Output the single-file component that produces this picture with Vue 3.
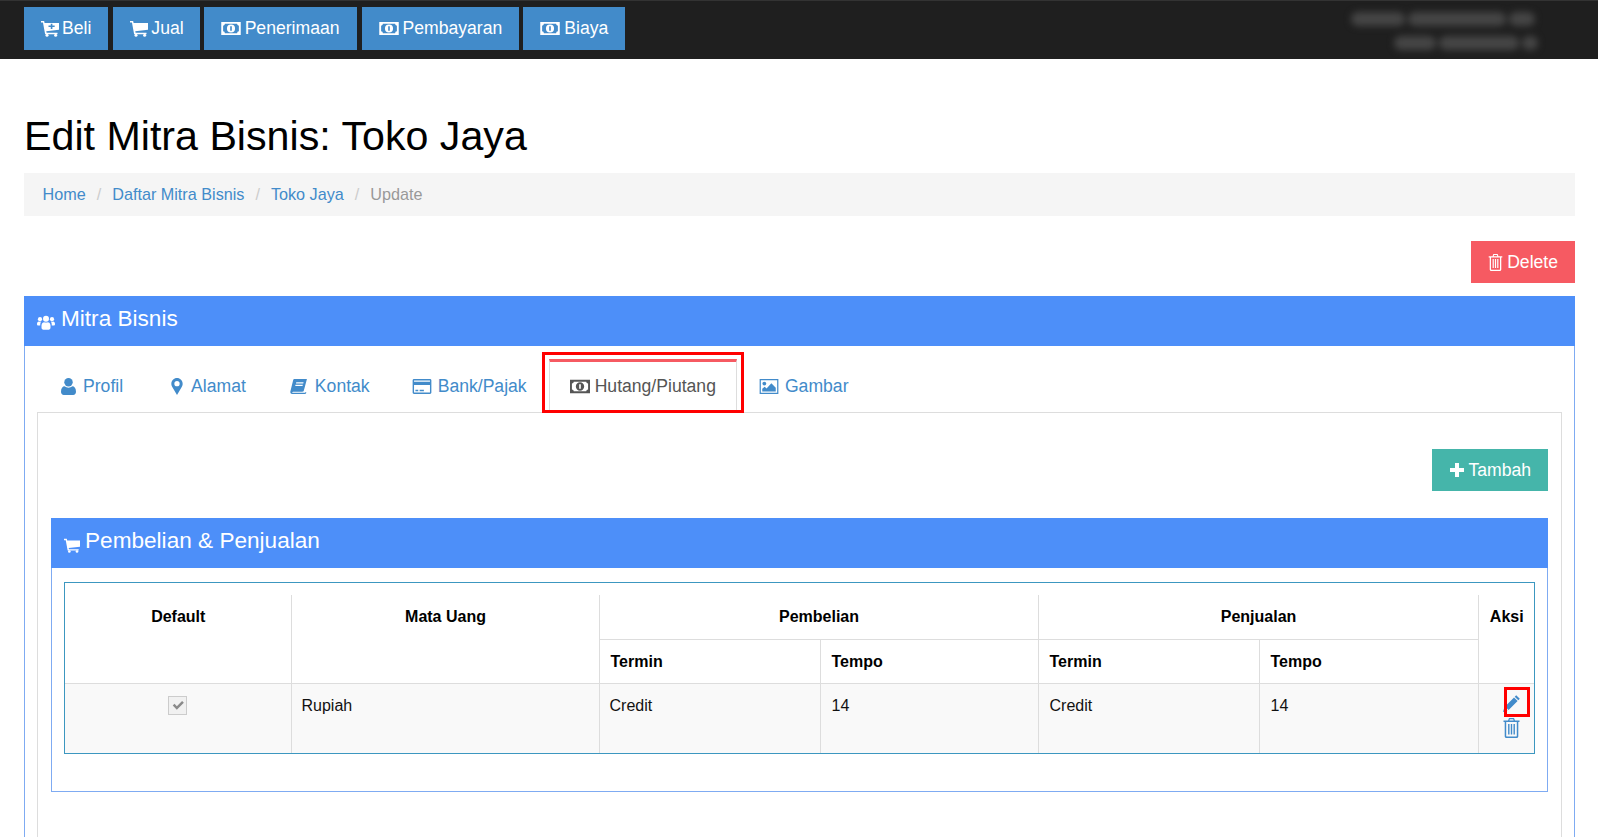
<script setup>
const navButtons = [
  { label: 'Beli', icon: 'i-cart-plus' },
  { label: 'Jual', icon: 'i-cart' },
  { label: 'Penerimaan', icon: 'i-money' },
  { label: 'Pembayaran', icon: 'i-money' },
  { label: 'Biaya', icon: 'i-money' }
]
const tabs = [
  { label: 'Profil', icon: 'i-user', cls: 'ic-user', tab: 'tab-profil' },
  { label: 'Alamat', icon: 'i-marker', cls: 'ic-marker', tab: '' },
  { label: 'Kontak', icon: 'i-book', cls: 'ic-book', tab: 'tab-kontak' },
  { label: 'Bank/Pajak', icon: 'i-card', cls: 'ic-wide', tab: 'tab-bank' },
  { label: 'Hutang/Piutang', icon: 'i-money', cls: 'ic-wide', tab: 'active' },
  { label: 'Gambar', icon: 'i-image', cls: 'ic-wide', tab: 'tab-gambar' }
]
</script>

<template>
  <div class="page">
    <svg class="defs" aria-hidden="true">
      <defs>
        <symbol id="i-cart" viewBox="0 0 24 22">
          <path d="M0 1h4.200l.6 2.500H24v9.300L7 14.600l.5 2H22v2H5.500L2.600 3H0z" />
          <circle cx="8" cy="20" r="2" /><circle cx="19.500" cy="20" r="2" />
        </symbol>
        <symbol id="i-cart-plus" viewBox="0 0 24 22">
          <path fill-rule="evenodd" d="M0 1h4.200l.6 2.500H24v9.300L7 14.600l.5 2H22v2H5.500L2.600 3H0zM13 4.500v2.600h-3v2h3v2.600h2.200V9.100h3v-2h-3V4.500z" />
          <circle cx="8" cy="20" r="2" /><circle cx="19.500" cy="20" r="2" />
        </symbol>
        <symbol id="i-money" viewBox="0 0 24 16">
          <path fill-rule="evenodd" d="M0 0H24V16H0ZM4.500 2.300H19.500Q19.500 4.500 21.700 4.500V11.500Q19.500 11.500 19.500 13.700H4.500Q4.500 11.500 2.300 11.500V4.500Q4.500 4.500 4.500 2.300ZM12 3a5 5 0 1 0 0 10a5 5 0 1 0 0-10ZM11 5.300h2v5.400h-2Z" />
        </symbol>
        <symbol id="i-users" viewBox="0 0 24 20">
          <circle cx="12" cy="5" r="4" /><circle cx="4" cy="5.500" r="2.800" /><circle cx="20" cy="5.500" r="2.800" />
          <path d="M6 14c0-3 2-4.500 3.500-4.500 1 .8 4 .8 5 0C16 9.500 18 11 18 14v3c0 1.500-1 2.500-2.500 2.500h-7C7 19.500 6 18.500 6 17z" />
          <path d="M0 12c0-2 1-3.500 2.500-3.500 1 .6 2 .6 3 .3C4.800 10 4.300 11.500 4.300 14H1.500C.5 14 0 13.300 0 12zM24 12c0-2-1-3.500-2.500-3.500-1 .6-2 .6-3 .3.700 1.200 1.200 2.700 1.200 5.200h2.800c1 0 1.500-.7 1.500-2z" />
        </symbol>
        <symbol id="i-user" viewBox="0 0 16 18">
          <circle cx="8" cy="4.500" r="4.500" />
          <path d="M0 14.500C0 11 1.800 8.800 3.800 8.800c1.200 1 2.700 1.500 4.200 1.500s3-.5 4.200-1.500c2 0 3.800 2.200 3.800 5.700 0 2-1.200 3.500-3 3.500H3c-1.800 0-3-1.500-3-3.500z" />
        </symbol>
        <symbol id="i-marker" viewBox="0 0 12 18">
          <path fill-rule="evenodd" d="M6 0C2.700 0 0 2.600 0 6c0 1.500.4 2.400 1 3.600L6 18l5-8.400c.6-1.200 1-2.100 1-3.600 0-3.400-2.700-6-6-6zm0 3.200a2.800 2.800 0 1 1 0 5.600 2.800 2.800 0 0 1 0-5.600z" />
        </symbol>
        <symbol id="i-book" viewBox="0 0 18 16">
          <path fill-rule="evenodd" d="M4.500 0H18l-3.300 12.300c-.2.900-.8 1.200-1.600 1.200H3.200c-.8 0-1.300.9-.6 1.200h12.600c.6 0 1.100-.3 1.300-.9l.9.500c-.3 1-1.100 1.700-2.200 1.700H2.300C.7 16 0 14.500.3 13.300L3.400.9C3.500.4 4 0 4.500 0zM6.600 3.500l-.3 1.200h7.800l.3-1.200zM5.800 6.200l-.3 1.200h7.800l.3-1.200z" />
        </symbol>
        <symbol id="i-card" viewBox="0 0 20 16">
          <path fill-rule="evenodd" d="M1.500 0h17c.9 0 1.500.6 1.500 1.500v13c0 .9-.6 1.500-1.500 1.500h-17C.6 16 0 15.400 0 14.500v-13C0 .6.600 0 1.500 0zM1.500 1.500V3h17V1.500zM1.500 6.500v8h17v-8zM3 11.500h3V13H3zM7.500 11.500h4.500V13H7.500z" />
        </symbol>
        <symbol id="i-image" viewBox="0 0 20 16">
          <path fill-rule="evenodd" d="M0 0h20v16H0zM1.300 1.300v13.400h17.400V1.300z" />
          <circle cx="5" cy="4.800" r="2" />
          <path d="M2.800 13.300V10.500l2.600-2.300 2 1.900 5.100-5.500 4.700 4.600v4.100z" />
        </symbol>
        <symbol id="i-trash" viewBox="0 0 16 20">
          <path fill-rule="evenodd" d="M5.500 0h5l1 2.500H16V4h-1.200v14.200c0 1-.8 1.800-1.800 1.800H3c-1 0-1.800-.8-1.800-1.800V4H0V2.500h4.500zM6.300 1.300l-.4 1.200h4.200l-.4-1.200zM2.700 4v14c0 .3.200.5.500.5h9.600c.3 0 .5-.2.500-.5V4zM4.600 6h1.400v10.500H4.600zM7.300 6h1.400v10.500H7.300zM10 6h1.400v10.500H10z" />
        </symbol>
        <symbol id="i-pencil" viewBox="0 0 18 18">
          <path d="M13.200 1.200l3.600 3.600-1.500 1.500-3.600-3.600zM11 3.400l3.600 3.600-9 9-3.600-3.600zM1.300 13.500l3.200 3.200L0 18z" />
        </symbol>
        <symbol id="i-plus" viewBox="0 0 14 14">
          <path d="M5 0h4v5h5v4H9v5H5V9H0V5h5z" />
        </symbol>
      </defs>
    </svg>

    <header class="topbar">
      <nav class="topnav">
        <a v-for="b in navButtons" :key="b.label" class="btn btn-nav">
          <svg class="ic" :class="b.icon === 'i-money' ? 'ic-money' : 'ic-cart'"><use :href="'#' + b.icon" /></svg>{{ b.label }}
        </a>
      </nav>
      <div class="smudge" aria-hidden="true">
        <div class="smudge-row row-a">
          <span class="s1"></span><span class="s2"></span><span class="s3"></span>
        </div>
        <div class="smudge-row">
          <span class="s4"></span><span class="s5"></span><span class="s6"></span>
        </div>
      </div>
    </header>

    <main class="content">
      <h1 class="title">Edit Mitra Bisnis: Toko Jaya</h1>

      <ol class="breadcrumb">
        <li><a>Home</a></li>
        <li class="sep">/</li>
        <li><a>Daftar Mitra Bisnis</a></li>
        <li class="sep">/</li>
        <li><a>Toko Jaya</a></li>
        <li class="sep">/</li>
        <li class="current">Update</li>
      </ol>

      <div class="actions">
        <a class="btn btn-delete"><svg class="ic ic-del"><use href="#i-trash" /></svg>Delete</a>
      </div>

      <section class="panel">
        <div class="panel-head">
          <svg class="ic ic-users"><use href="#i-users" /></svg>Mitra Bisnis
        </div>
        <div class="panel-body">
          <ul class="tabs">
            <li v-for="t in tabs" :key="t.label" class="tab" :class="t.tab">
              <svg class="ic" :class="t.cls"><use :href="'#' + t.icon" /></svg>{{ t.label }}
            </li>
          </ul>

          <div class="pane">
            <div class="pane-actions">
              <a class="btn btn-add"><svg class="ic ic-plus"><use href="#i-plus" /></svg>Tambah</a>
            </div>

            <section class="panel inner">
              <div class="panel-head inner-head">
                <svg class="ic ic-innercart"><use href="#i-cart" /></svg>Pembelian &amp; Penjualan
              </div>
              <div class="inner-body">
                <div class="table-wrap">
                  <table class="grid">
                    <colgroup>
                      <col class="c-default" /><col class="c-currency" /><col class="c-term" /><col class="c-tempo" />
                      <col class="c-term2" /><col class="c-tempo2" /><col />
                    </colgroup>
                    <thead>
                      <tr>
                        <th rowspan="2" class="center">Default</th>
                        <th rowspan="2" class="center">Mata Uang</th>
                        <th colspan="2" class="center">Pembelian</th>
                        <th colspan="2" class="center">Penjualan</th>
                        <th rowspan="2" class="center">Aksi</th>
                      </tr>
                      <tr>
                        <th>Termin</th><th>Tempo</th><th>Termin</th><th>Tempo</th>
                      </tr>
                    </thead>
                    <tbody>
                      <tr>
                        <td class="center">
                          <span class="checkbox" role="checkbox" aria-checked="true" aria-disabled="true">
                            <svg viewBox="0 0 12 12" class="check"><path d="M1.500 6.500l1.500-1.500 2 2L9.500 2.500 11 4 5 10z" /></svg>
                          </span>
                        </td>
                        <td>Rupiah</td>
                        <td>Credit</td>
                        <td>14</td>
                        <td>Credit</td>
                        <td>14</td>
                        <td class="center aksi">
                          <a class="act act-edit"><svg class="ic ic-pencil"><use href="#i-pencil" /></svg></a>
                          <a class="act"><svg class="ic ic-trash"><use href="#i-trash" /></svg></a>
                        </td>
                      </tr>
                    </tbody>
                  </table>
                </div>
              </div>
            </section>
          </div>
        </div>
      </section>
    </main>
  </div>
</template>

<style>
html, body { margin: 0; background: #fff; overflow: hidden; }
</style>

<style scoped>
.page {
  height: 837px;
  overflow: hidden;
  font-family: "Liberation Sans", Arial, sans-serif;
  font-size: 16px;
  color: #111;
  background: #fff;
}
.defs { width: 0; height: 0; position: absolute; }
.ic { fill: currentColor; display: inline-block; flex: none; }

.topbar {
  height: 59px;
  box-sizing: border-box;
  background: #1f1f1f;
  border-top: 1px solid #333;
  padding: 6px 0 0 24px;
  display: flex;
  justify-content: space-between;
  align-items: flex-start;
}
.topnav { display: flex; gap: 5px; }
.btn {
  display: flex;
  align-items: center;
  color: #fff;
  font-size: 17.6px;
  box-sizing: border-box;
  height: 43px;
  padding: 0 17px;
}
.btn-nav { background: #428bca; }
.btn-nav:nth-child(2) { padding: 0 16px 0 17px; margin-right: -1px; }
.btn-nav:nth-child(3) { padding: 0 17px 0 17px; }
.btn-nav:nth-child(4) { margin-right: -1px; }
.ic-cart { width: 18px; height: 17px; margin: -1px 3px 0 0; }
.ic-money { width: 20px; height: 13px; margin-right: 4px; }

.smudge { width: 215px; margin-right: 60px; padding-top: 5px; filter: blur(3.500px); }
.smudge-row { display: flex; justify-content: flex-end; height: 24px; gap: 3px; }
.row-a { margin-right: 3px; }
.smudge-row span { display: block; height: 14px; background: #454545; border-radius: 7px; }
.s1 { width: 54px; }
.s2 { width: 98px; }
.s3 { width: 26px; }
.s4 { width: 42px; }
.s5 { width: 80px; }
.s6 { width: 16px; }

.content { padding: 0 23px 0 24px; }
.title {
  margin: 0;
  padding: 54px 0 14px;
  font-size: 41.2px;
  line-height: 46px;
  font-weight: 400;
  color: #000;
}
.breadcrumb {
  list-style: none;
  margin: 0;
  padding: 0 18px 0 18.500px;
  height: 43px;
  background: #f5f5f5;
  display: flex;
  align-items: center;
  gap: 11px;
  color: #428bca;
  font-size: 16.2px;
}
.breadcrumb .sep { color: #ccc; }
.breadcrumb .current { color: #999; }

.actions { display: flex; justify-content: flex-end; padding: 25px 0 13px; }
.btn-delete { background: #f65a62; height: 42px; padding: 0 17px; }
.ic-del { width: 15px; height: 17px; margin-right: 4px; }

.panel { border: 1px solid #7fabf2; border-top: 0; border-bottom: 0; }
.panel-head {
  height: 50px;
  margin: 0 -1px;
  background: #4d8ff9;
  color: #fff;
  font-size: 22.6px;
  display: flex;
  align-items: center;
  padding-left: 13px;
  padding-bottom: 4px;
  box-sizing: border-box;
}
.ic-users { width: 18px; height: 15px; margin: 6px 6px 0 0; }
.panel-body { padding: 13px 12px 0; }

.tabs { list-style: none; margin: 0; padding: 0 0 0 3px; display: flex; gap: 2px; font-size: 17.6px; color: #428bca; }
.tab {
  position: relative;
  height: 53px;
  box-sizing: border-box;
  padding: 0 21px 2px;
  display: flex;
  align-items: center;
  gap: 7px;
  border-top: 3px solid transparent;
}
.tab-profil { margin-right: 4px; }
.tab-kontak { gap: 8px; margin-right: -2px; }
.tab-bank { margin-right: -1px; }
.tab-gambar { margin-left: -1px; }
.tab.active {
  color: #555;
  border-top: 3px solid #f65a62;
  border-left: 1px solid #ddd;
  border-right: 1px solid #ddd;
  background: #fff;
  padding: 0 20px 2px;
  gap: 6px;
  margin-bottom: -1px;
  height: 54px;
  z-index: 1;
}
.tab.active::after {
  content: "";
  position: absolute;
  top: -10px;
  left: -8px;
  right: -8px;
  bottom: 0;
  border: 3px solid #f00;
  pointer-events: none;
}
.ic-user { width: 15px; height: 17px; }
.ic-marker { width: 12px; height: 17px; margin-right: 1px; }
.ic-book { width: 17px; height: 15px; }
.ic-wide { width: 20px; height: 15px; }
.tab .ic-wide { margin-right: -1px; }

.pane { border: 1px solid #ddd; padding: 36px 13px 80px; min-height: 500px; }
.pane-actions { display: flex; justify-content: flex-end; }
.btn-add { background: #45b5aa; height: 42px; padding: 0 17px 0 18px; }
.ic-plus { width: 14px; height: 14px; margin-right: 4px; }

.inner { margin-top: 27px; border-bottom: 1px solid #7fabf2; }
.inner-head { padding-left: 13px; }
.ic-innercart { width: 16px; height: 15px; margin: 8px 5px 0 0; }
.inner-body { padding: 14px 12px 37px; }
.table-wrap { border: 1px solid #3c97c0; padding-top: 12px; }

.grid { width: 100%; border-collapse: collapse; table-layout: fixed; font-size: 16px; }
.c-default { width: 226px; }
.c-currency { width: 308px; }
.c-term { width: 221px; }
.c-tempo { width: 218px; }
.c-term2 { width: 221px; }
.c-tempo2 { width: 219px; }
.grid th, .grid td {
  border: 1px solid #ddd;
  padding: 10px;
  text-align: left;
  vertical-align: top;
  line-height: 23px;
  box-sizing: border-box;
  color: #111;
}
.grid th { font-weight: 700; color: #000; height: 44px; padding-left: 11px; }
.grid tr > :first-child { border-left: 0; }
.grid tr > :last-child { border-right: 0; }
.grid thead tr:first-child th { border-top: 0; }
.grid tbody td { height: 70px; background: #f9f9f9; border-bottom: 0; }
.grid tbody td:nth-child(n+4) { padding-left: 11px; }
.grid .center { text-align: center; }
.grid .aksi { padding: 3px 0 0; }

.checkbox {
  display: inline-flex;
  align-items: center;
  justify-content: center;
  width: 19px;
  height: 19px;
  box-sizing: border-box;
  margin-top: 2px;
  border: 1px solid #ccc;
  background: #f1f1f1;
}
.check { width: 14px; height: 14px; fill: #8a8a8a; }

.act { display: block; color: #428bca; height: 22px; }
.act-edit {
  position: relative;
  height: 31px;
  display: flex;
  align-items: center;
  justify-content: center;
}
.act-edit::after {
  content: "";
  position: absolute;
  left: 14px;
  top: 0;
  width: 26px;
  height: 30px;
  box-sizing: border-box;
  border: 3px solid #f00;
  pointer-events: none;
}
.ic-pencil { width: 18px; height: 18px; margin-top: 1px; }
.ic-trash { width: 17px; height: 20px; }
</style>
